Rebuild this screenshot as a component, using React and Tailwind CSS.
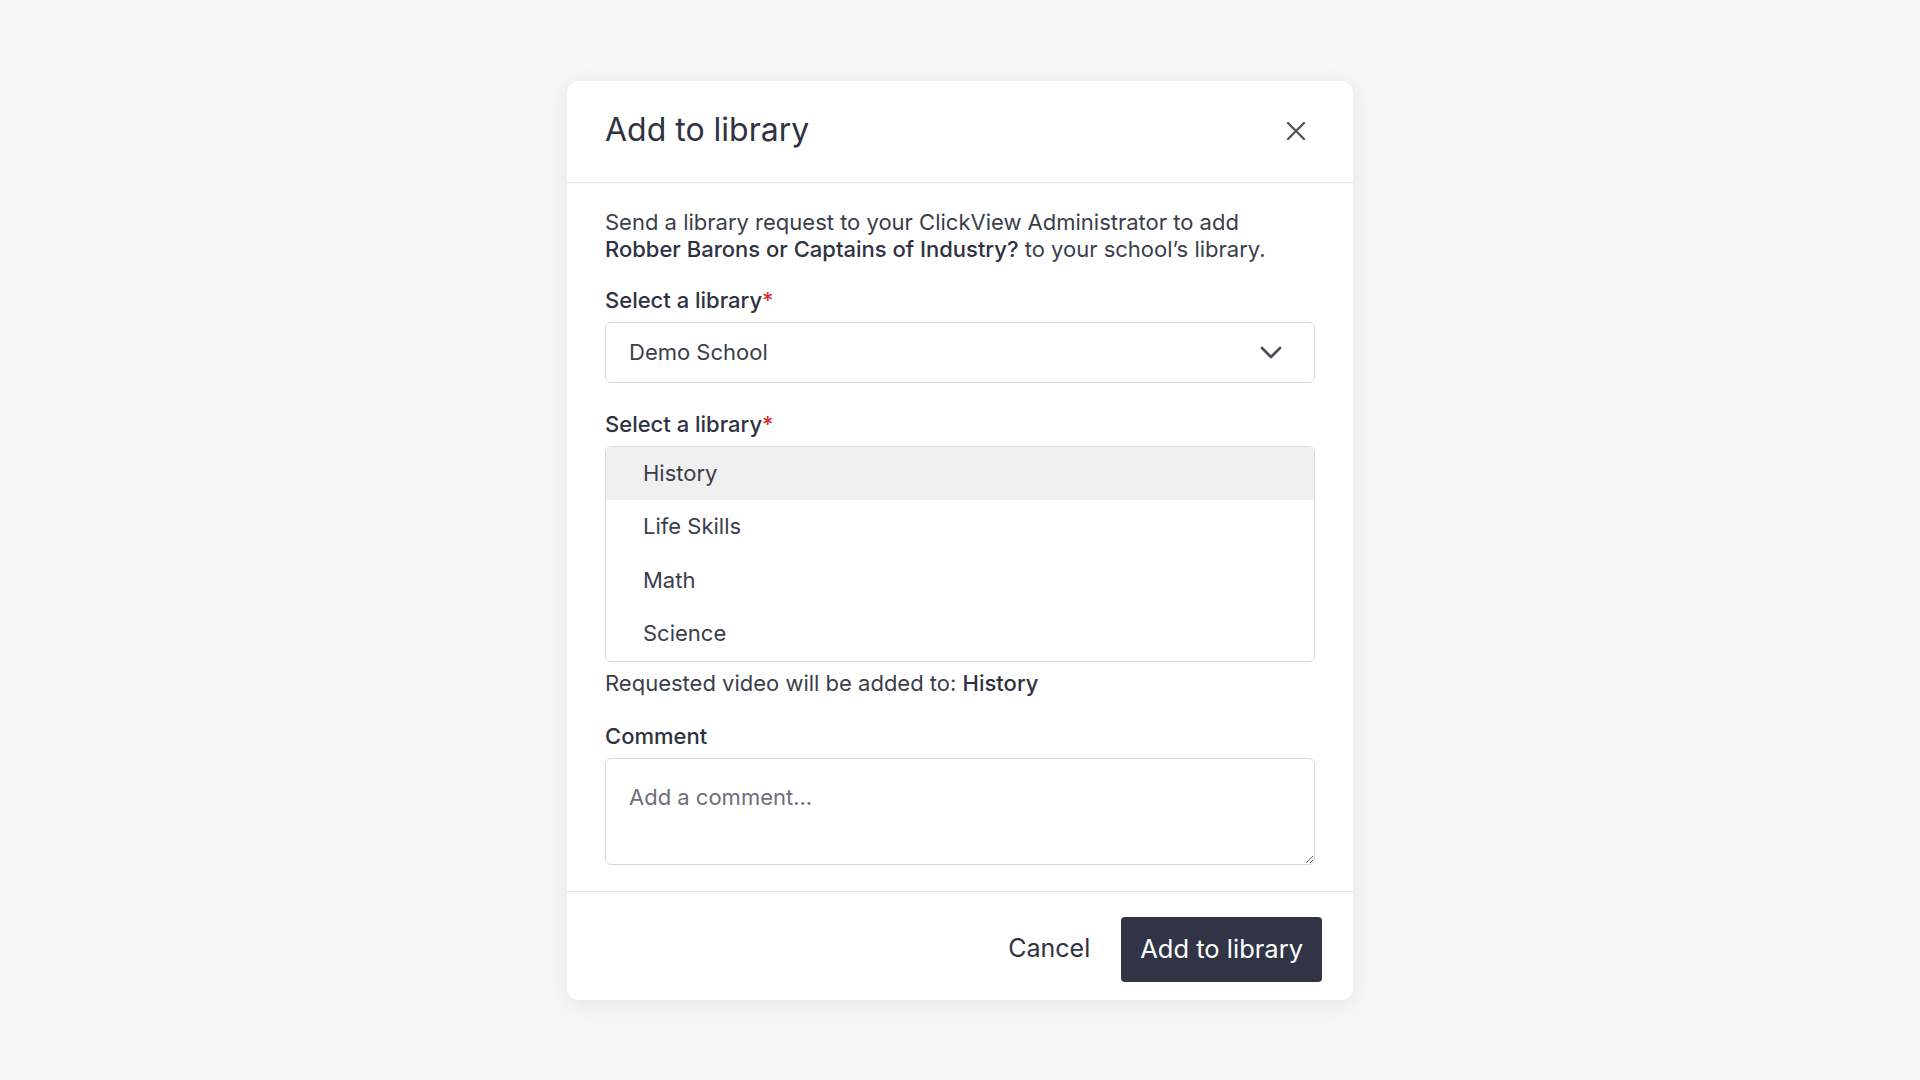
import { useState } from 'react';

const libraries = ['History', 'Life Skills', 'Math', 'Science'];

function CloseIcon() {
    return (
        <svg width="20" height="20" viewBox="0 0 20 20" fill="none" stroke="#55565f" strokeWidth="2.4" strokeLinecap="round">
            <path d="M2 2L18 18M18 2L2 18" />
        </svg>
    );
}

function ChevronDown() {
    return (
        <svg width="22" height="13" viewBox="0 0 22 13" fill="none" stroke="#4a4c57" strokeWidth="2.6" strokeLinecap="round" strokeLinejoin="round">
            <path d="M2 2L11 11L20 2" />
        </svg>
    );
}

export default function App() {
    const [selected, setSelected] = useState('History');
    const [comment, setComment] = useState('');

    return (
        <div className="min-h-screen bg-[#f7f7f7] flex items-center justify-center font-['Inter',sans-serif] text-[#3b3e4b]">
            <div className="w-[786px] bg-white rounded-[12px] shadow-[0_4px_24px_rgba(0,0,0,0.08)]">
                {/* Header */}
                <div className="h-[102px] pl-[38px] pr-[47px] flex items-center justify-between border-b border-[#e2e2e2]">
                    <h2 className="text-[32px] leading-none text-[#2f3242] pb-[2px]">Add to library</h2>
                    <button className="w-[20px] h-[20px] flex items-center justify-center">
                        <CloseIcon />
                    </button>
                </div>

                {/* Body */}
                <div className="px-[38px] pt-[26px] pb-[26px]">
                    <p className="text-[22px] leading-[27px]">
                        Send a library request to your ClickView Administrator to add{' '}
                        <span className="font-medium text-[#2f3242]">Robber Barons or Captains of Industry?</span> to your school’s library.
                    </p>

                    <label className="block mt-[24px] text-[22px] leading-[27px] font-medium text-[#2f3242]">
                        Select a library<span className="text-[#d0312d]">*</span>
                    </label>
                    <div className="mt-[8px] h-[61px] border border-[#d9d9d9] rounded-[6px] flex items-center justify-between pl-[23px] pr-[32px]">
                        <span className="text-[22px]">Demo School</span>
                        <ChevronDown />
                    </div>

                    <label className="block mt-[28px] text-[22px] leading-[27px] font-medium text-[#2f3242]">
                        Select a library<span className="text-[#d0312d]">*</span>
                    </label>
                    <ul className="mt-[8px] border border-[#d9d9d9] rounded-[6px] overflow-hidden">
                        {libraries.map(lib => (
                            <li
                                key={lib}
                                onClick={() => setSelected(lib)}
                                className={
                                    lib === selected
                                        ? 'h-[53.5px] flex items-center pl-[37px] text-[22px] bg-[#f0f0f0] cursor-pointer'
                                        : 'h-[53.5px] flex items-center pl-[37px] text-[22px] cursor-pointer'
                                }
                            >
                                {lib}
                            </li>
                        ))}
                    </ul>
                    <p className="mt-[8px] text-[22px] leading-[27px]">
                        Requested video will be added to: <span className="font-medium text-[#2f3242]">{selected}</span>
                    </p>

                    <label className="block mt-[26px] text-[22px] leading-[27px] font-medium text-[#2f3242]">Comment</label>
                    <textarea
                        value={comment}
                        onChange={e => setComment(e.target.value)}
                        placeholder="Add a comment..."
                        className="block mt-[8px] w-full h-[107px] border border-[#d9d9d9] rounded-[6px] px-[23px] pt-[25px] text-[22px] leading-[27px] placeholder:text-[#6d6f79] outline-none"
                    />
                </div>

                {/* Footer */}
                <div className="border-t border-[#e2e2e2] pt-[25px] pb-[18px] pr-[31px] flex items-center justify-end gap-[31px]">
                    <button className="text-[25px] text-[#2f3242]">Cancel</button>
                    <button className="h-[65px] px-[19px] rounded-[4px] bg-[#313445] text-white text-[25.5px]">Add to library</button>
                </div>
            </div>
        </div>
    );
}
